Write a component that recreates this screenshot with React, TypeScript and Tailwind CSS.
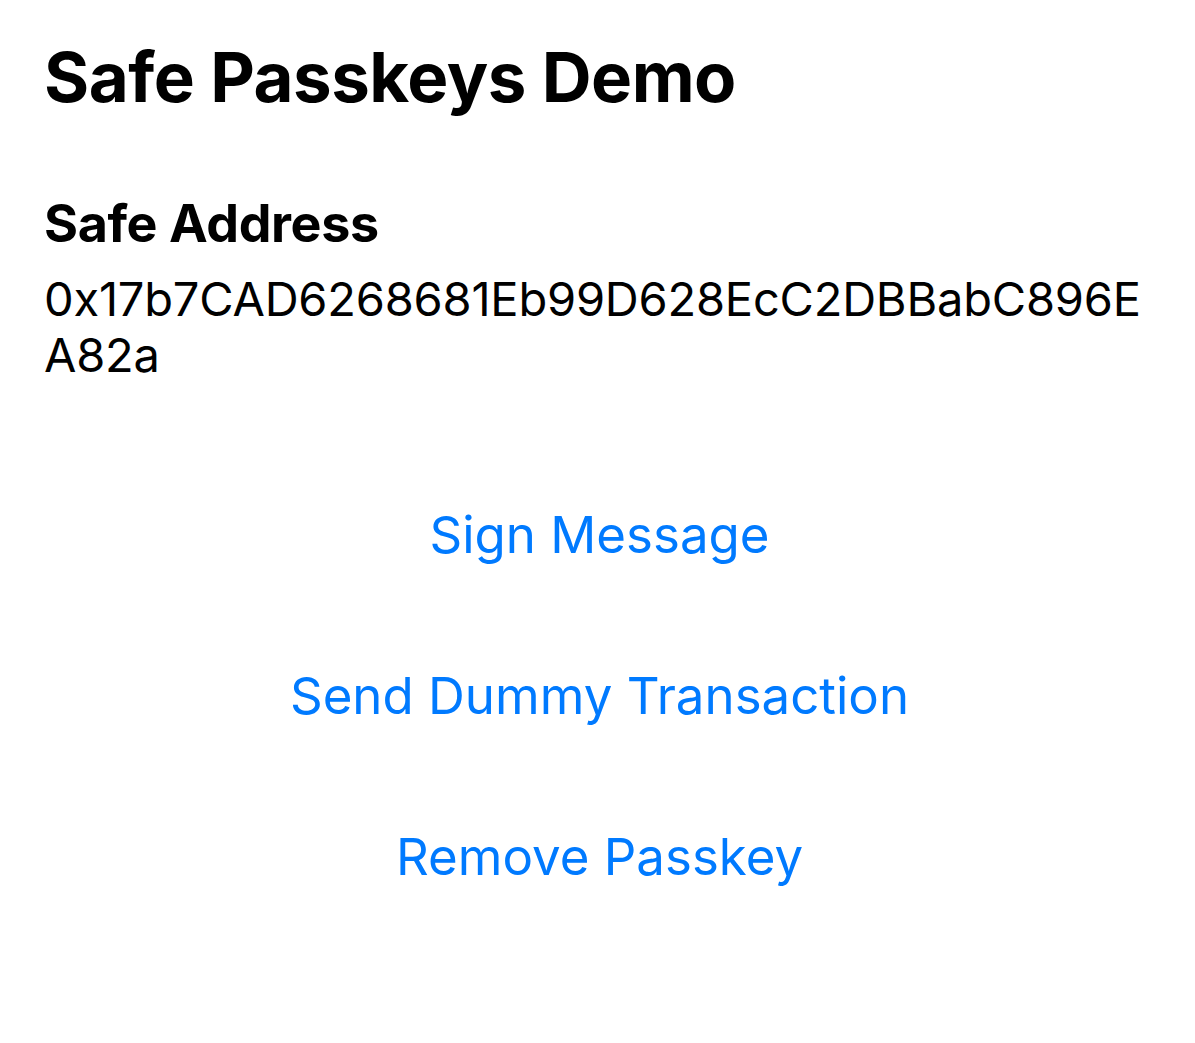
export default function App() {
  const actions = ["Sign Message", "Send Dummy Transaction", "Remove Passkey"];
  return (
    <div className="min-h-screen bg-white pl-[44px] pr-[46px] pt-[34px] text-black font-['Inter',sans-serif]">
      <h1 className="text-[69px] leading-[86px] font-bold tracking-[-0.5px]">Safe Passkeys Demo</h1>
      <div className="mt-[74px]">
        <h2 className="text-[52px] leading-[60px] font-bold tracking-[-0.4px]">Safe Address</h2>
        <p className="mt-[17px] text-[47px] leading-[56px] tracking-[-0.2px] break-all">
          0x17b7CAD6268681Eb99D628EcC2DBBabC896EA82a
        </p>
      </div>
      <div className="mt-[121px] pl-[6px] flex flex-col items-center gap-[100px]">
        {actions.map((a) => (
          <button key={a} className="text-[51px] leading-[61px] text-[#007AFF]">
            {a}
          </button>
        ))}
      </div>
    </div>
  );
}
